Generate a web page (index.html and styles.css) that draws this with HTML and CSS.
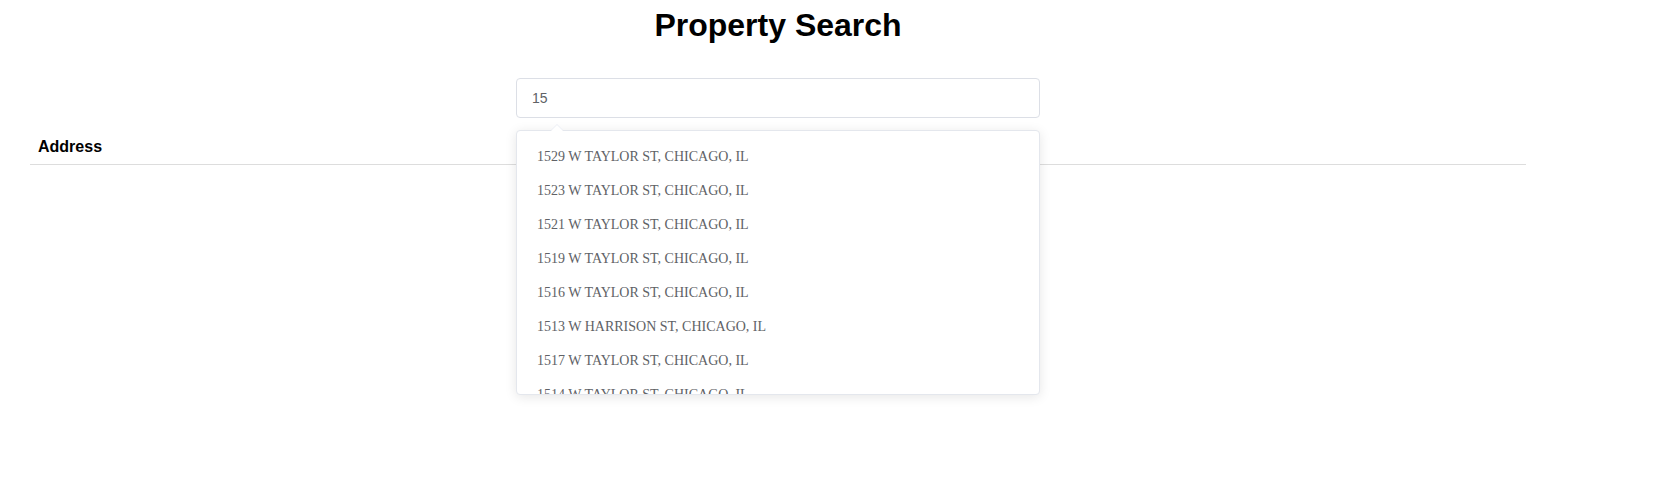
FILE: index.html
```html
<!DOCTYPE html>
<html>
<head>
<meta charset="utf-8">
<title>Property Search</title>
<link rel="stylesheet" href="styles.css">
</head>
<body>
<div class="page">
  <h1 class="title">Property Search</h1>
  <div class="search">
    <input class="search-input" type="text" value="15">
    <div class="suggest">
      <span class="arrow"></span>
      <ul class="suggest-list">
        <li>1529 W TAYLOR ST, CHICAGO, IL</li>
        <li>1523 W TAYLOR ST, CHICAGO, IL</li>
        <li>1521 W TAYLOR ST, CHICAGO, IL</li>
        <li>1519 W TAYLOR ST, CHICAGO, IL</li>
        <li>1516 W TAYLOR ST, CHICAGO, IL</li>
        <li>1513 W HARRISON ST, CHICAGO, IL</li>
        <li>1517 W TAYLOR ST, CHICAGO, IL</li>
        <li>1514 W TAYLOR ST, CHICAGO, IL</li>
      </ul>
    </div>
  </div>
  <table class="results">
    <thead>
      <tr><th>Address</th></tr>
    </thead>
    <tbody></tbody>
  </table>
</div>
</body>
</html>
```

FILE: styles.css
```css
html, body {
  margin: 0;
  padding: 0;
  background: #ffffff;
  min-height: 100%;
}

.page {
  width: 1540px;
  min-height: 485px;
  margin: 0 8px;
  padding-top: 7px;
  font-family: "Liberation Sans", Arial, sans-serif;
}

.title {
  margin: 0;
  text-align: center;
  font-size: 32px;
  font-weight: bold;
  color: #000;
  line-height: normal;
}

.search {
  position: relative;
  width: 524px;
  margin: 34px auto 0;
}

.search-input {
  display: block;
  box-sizing: border-box;
  width: 100%;
  height: 40px;
  padding: 0 15px;
  border: 1px solid #dcdfe6;
  border-radius: 4px;
  font-family: "Liberation Sans", Arial, sans-serif;
  font-size: 14px;
  color: #606266;
  background: #fff;
  outline: none;
}

.suggest {
  position: absolute;
  top: 52px;
  left: 0;
  width: 100%;
  box-sizing: border-box;
  background: #fff;
  border: 1px solid #e4e7ed;
  border-radius: 4px;
  box-shadow: 0 2px 12px 0 rgba(0, 0, 0, 0.1);
  z-index: 10;
}

.arrow {
  position: absolute;
  top: -7px;
  left: 34px;
  width: 0;
  height: 0;
  border-left: 6px solid transparent;
  border-right: 6px solid transparent;
  border-bottom: 6px solid #ebeef5;
}

.arrow::after {
  content: "";
  position: absolute;
  top: 1px;
  left: -6px;
  width: 0;
  height: 0;
  border-left: 6px solid transparent;
  border-right: 6px solid transparent;
  border-bottom: 6px solid #fff;
}

.suggest-list {
  list-style: none;
  margin: 0;
  padding: 9px 0 0;
  height: 254px;
  overflow: hidden;
}

.suggest-list li {
  padding: 0 20px;
  line-height: 34px;
  height: 34px;
  font-family: "Liberation Serif", "Times New Roman", serif;
  font-size: 14px;
  color: #606266;
  white-space: nowrap;
}

.results {
  width: 1496px;
  margin: 12px 22px 0;
  border-collapse: collapse;
}

.results th {
  text-align: left;
  padding: 8px;
  font-size: 16px;
  font-weight: bold;
  color: #000;
  border-bottom: 1px solid #dddddd;
}
```
